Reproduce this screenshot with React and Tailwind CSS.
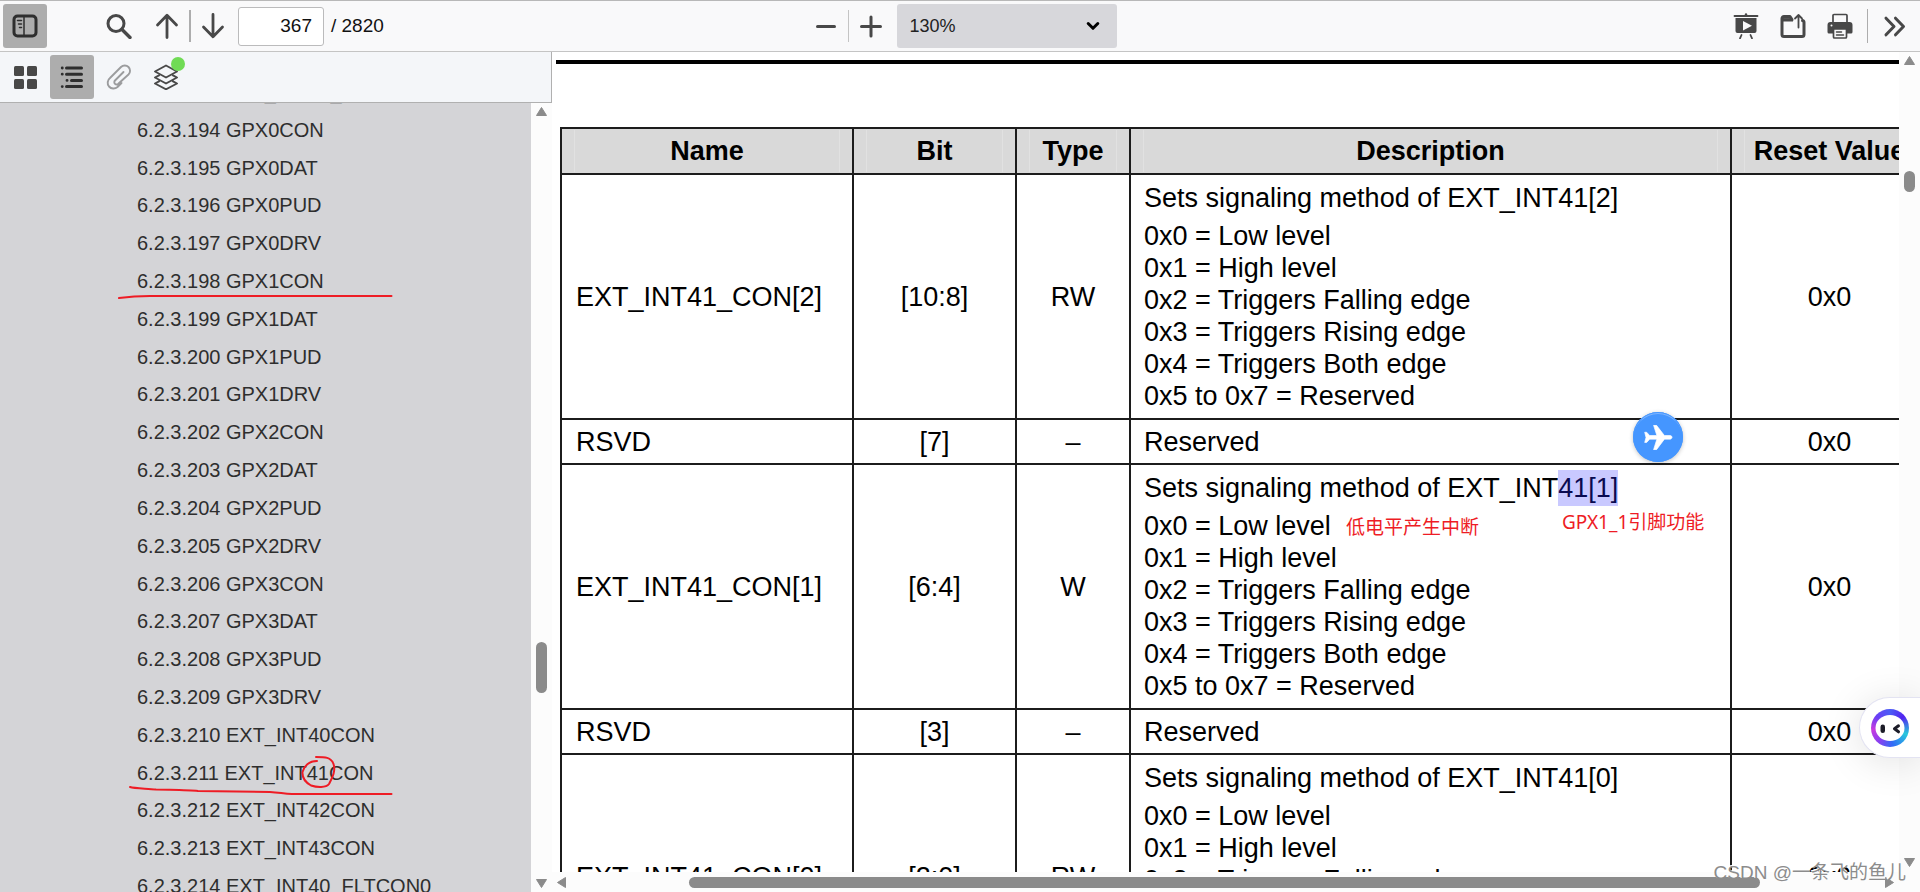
import React from "react";

const OUTLINE = [
  "6.2.3.193 EXT_INT29_FIXPRI",
  "6.2.3.194 GPX0CON",
  "6.2.3.195 GPX0DAT",
  "6.2.3.196 GPX0PUD",
  "6.2.3.197 GPX0DRV",
  "6.2.3.198 GPX1CON",
  "6.2.3.199 GPX1DAT",
  "6.2.3.200 GPX1PUD",
  "6.2.3.201 GPX1DRV",
  "6.2.3.202 GPX2CON",
  "6.2.3.203 GPX2DAT",
  "6.2.3.204 GPX2PUD",
  "6.2.3.205 GPX2DRV",
  "6.2.3.206 GPX3CON",
  "6.2.3.207 GPX3DAT",
  "6.2.3.208 GPX3PUD",
  "6.2.3.209 GPX3DRV",
  "6.2.3.210 EXT_INT40CON",
  "6.2.3.211 EXT_INT41CON",
  "6.2.3.212 EXT_INT42CON",
  "6.2.3.213 EXT_INT43CON",
  "6.2.3.214 EXT_INT40_FLTCON0",
];

const LEVELS = [
  "0x0 = Low level",
  "0x1 = High level",
  "0x2 = Triggers Falling edge",
  "0x3 = Triggers Rising edge",
  "0x4 = Triggers Both edge",
  "0x5 to 0x7 = Reserved",
];

const ROWS = [
  { name: "EXT_INT41_CON[2]", bit: "[10:8]", type: "RW", index: "41[2]" },
  { name: "RSVD", bit: "[7]", type: "–" },
  { name: "EXT_INT41_CON[1]", bit: "[6:4]", type: "W", index: "41[1]", marked: true },
  { name: "RSVD", bit: "[3]", type: "–" },
  { name: "EXT_INT41_CON[0]", bit: "[2:0]", type: "RW", index: "41[0]" },
];

function Icon({ children, className = "" }) {
  return (
    <svg
      width="26"
      height="26"
      viewBox="0 0 26 26"
      fill="none"
      stroke="currentColor"
      strokeWidth="3"
      strokeLinecap="round"
      strokeLinejoin="round"
      className={className}
      aria-hidden="true"
    >
      {children}
    </svg>
  );
}

function ToolButton({ label, active, children }) {
  return (
    <button
      type="button"
      aria-label={label}
      title={label}
      className={
        "relative flex h-11 w-11 shrink-0 items-center justify-center rounded-[3px] " +
        (active ? "bg-[#adadad] text-[#2e2e2e]" : "text-[#484848]")
      }
    >
      {children}
    </button>
  );
}

function Arrow({ dir }) {
  const d = {
    up: "M5.5 1.5 10.5 9.5H.5Z",
    down: "M5.5 9.5 .5 1.5h10Z",
    left: "M1.5 5.5 9.5 .5v10Z",
    right: "M9.5 5.5 1.5 .5v10Z",
  }[dir];
  return (
    <svg width="11" height="11" viewBox="0 0 11 11" className="shrink-0" aria-hidden="true">
      <path d={d} fill="#8b8b8b" stroke="#8b8b8b" strokeLinejoin="round" />
    </svg>
  );
}

function Toolbar() {
  return (
    <header className="flex h-[52px] shrink-0 items-center border-t border-b border-t-[#b8b8b8] border-b-[#c4c4c4] bg-[#f9f9fa] pl-[3px]">
      <div className="flex flex-1 items-center">
        <ToolButton label="Toggle Sidebar" active>
          <Icon>
            <rect x="2" y="3" width="22" height="20" rx="3.5" />
            <path d="M12 4v18" strokeWidth="1.5" />
            <path d="M5.5 7.5h4M6.5 11h3M7.5 14.5h2" strokeWidth="1.5" />
          </Icon>
        </ToolButton>
        <div className="ml-[50px] flex items-center">
          <ToolButton label="Find">
            <Icon>
              <circle cx="10" cy="10.5" r="8" />
              <path d="M16 16.5 24 24.5" strokeWidth="3.4" />
            </Icon>
          </ToolButton>
          <div className="ml-1 flex items-center">
            <ToolButton label="Previous">
              <Icon>
                <path d="M13 24.5V3M3.5 12 13 2.2 22.5 12" strokeWidth="2.8" />
              </Icon>
            </ToolButton>
            <span className="h-8 w-0.5 bg-[#adadad]" />
            <ToolButton label="Next">
              <Icon>
                <path d="M13 1.5V23M3.5 14 13 23.8 22.5 14" strokeWidth="2.8" />
              </Icon>
            </ToolButton>
          </div>
        </div>
        <input
          type="text"
          aria-label="Page"
          defaultValue="367"
          className="ml-[3px] h-[39px] w-[86px] rounded-[3px] border border-[#bbbbbc] bg-white pr-[11px] text-right text-[19px] text-[#111]"
        />
        <span className="ml-[7px] text-[19px] whitespace-nowrap text-[#111]">/ 2820</span>
      </div>
      <div className="flex items-center">
        <ToolButton label="Zoom Out">
          <Icon>
            <path d="M4.5 13.5h17" />
          </Icon>
        </ToolButton>
        <span className="h-8 w-px bg-[#c4c4c4]" />
        <ToolButton label="Zoom In">
          <Icon>
            <path d="M3.5 13.5h19M13 4v19" />
          </Icon>
        </ToolButton>
        <div className="relative ml-1 flex items-center">
          <select
            aria-label="Zoom"
            defaultValue="130%"
            className="h-11 w-[220px] appearance-none rounded-[3px] bg-[#d7d7db] px-[13px] text-[18px] text-[#222]"
          >
            <option>100%</option>
            <option>130%</option>
            <option>150%</option>
          </select>
          <svg width="14" height="10" viewBox="0 0 14 10" className="pointer-events-none absolute right-[17px]" aria-hidden="true">
            <path d="M2.2 2.5 7 7.3 11.8 2.5" fill="none" stroke="#000" strokeWidth="3" strokeLinecap="round" strokeLinejoin="round" />
          </svg>
        </div>
      </div>
      <div className="flex flex-1 items-center justify-end gap-[3px] pr-[3px]">
        <ToolButton label="Presentation Mode">
          <Icon>
            <path d="M1.5 3h23" strokeWidth="1.8" />
            <path d="M13 1.5v1" strokeWidth="2.4" />
            <path d="M2.5 5h21v13a2 2 0 0 1-2 2h-17a2 2 0 0 1-2-2Z" fill="currentColor" stroke="none" />
            <path d="M10 8v9.5l9-4.7Z" fill="#f9f9fa" stroke="none" />
            <path d="M8.5 22 7 25.3M17.500 22 19 25.3" strokeWidth="1.8" />
          </Icon>
        </ToolButton>
        <ToolButton label="Open">
          <Icon>
            <path d="M12 6.500 10 3.500H4A2 2 0 0 0 2 5.500V21.500a2 2 0 0 0 2 2H22a2 2 0 0 0 2-2V9.500a2 2 0 0 0-1.500-2" />
            <path d="M3 5.200h8l2 2.800H3Z" fill="currentColor" strokeWidth="1" />
            <path d="M18.500 14.500V2.500M15 5.500l3.500-3.500L22 5.500" strokeWidth="1.8" />
          </Icon>
        </ToolButton>
        <ToolButton label="Print">
          <Icon>
            <path d="M6 10V2.500a1 1 0 0 1 1-1h12a1 1 0 0 1 1 1V10" strokeWidth="1.700" />
            <path d="M3.500 9h19A3 3 0 0 1 25.500 12v7a1.500 1.500 0 0 1-1.500 1.500H2A1.500 1.500 0 0 1 .5 19v-7A3 3 0 0 1 3.500 9Z" fill="currentColor" stroke="none" />
            <path d="M6.500 16h13v8a1 1 0 0 1-1 1h-11a1 1 0 0 1-1-1Z" fill="#f9f9fa" strokeWidth="1.700" />
            <path d="M9.500 19h5M9.500 22h7" strokeWidth="1.500" />
            <circle cx="4.500" cy="12.500" r="1" fill="#f9f9fa" stroke="none" />
          </Icon>
        </ToolButton>
        <span className="mx-[2px] h-[34px] w-px bg-[#adadad]" />
        <ToolButton label="Tools">
          <Icon>
            <path d="M4 5.200 12 13.500 4 21.800M13.500 5.200 21.500 13.500 13.500 21.800" />
          </Icon>
        </ToolButton>
      </div>
    </header>
  );
}

function Ink() {
  return (
    <svg className="pointer-events-none absolute top-0 left-0" width="531" height="789" viewBox="0 103 531 789" fill="none" stroke="#ee1c25" strokeWidth="2" strokeLinecap="round" aria-hidden="true">
      <path d="M119 298C128 296.800 138 296 150 296H391.500" />
      <path d="M130 787C134 788.500 146 788.500 156 789.500C178 790 190 790 198 791L270 792C280 792.500 284 794 292 794H391.500" />
      <path d="M316 757C325 757 331 757 333.500 764C336 771 332 778 329 784C326 788 317 787.500 311 785.500C305 782 302 778 302.500 772C304 766 309 761 317 761" />
    </svg>
  );
}

function Sidebar() {
  return (
    <aside className="flex w-[552px] shrink-0 flex-col">
      <div className="flex h-[51px] shrink-0 items-center gap-[3px] border-r border-b border-r-[#b0b0b0] border-b-[#b0b0b0] bg-[#f4f6f9] pl-[3px]">
        <ToolButton label="Thumbnails">
          <Icon className="fill-current stroke-none">
            <rect x="2" y="2" width="10" height="10" rx="1.500" />
            <rect x="15" y="2" width="10" height="10" rx="1.500" />
            <rect x="2" y="15" width="10" height="10" rx="1.500" />
            <rect x="15" y="15" width="10" height="10" rx="1.500" />
          </Icon>
        </ToolButton>
        <ToolButton label="Document Outline" active>
          <Icon>
            <path d="M7.500 4H22.500M7.500 10.200H22.500M12.500 16.400H22.500M7.500 22.600H22.500" />
            <path d="M3.200 4h.1M3.200 10.200h.1M8 16.400h.1M3.200 22.600h.1" strokeWidth="2.800" />
          </Icon>
        </ToolButton>
        <ToolButton label="Attachments">
          <Icon className="text-[#9b9c9e]">
            <path d="M17.500 8 9 16.500a2.300 2.300 0 0 0 3.300 3.300L22.500 10.500A5.300 5.300 0 0 0 15 3L4 14A6 6 0 0 0 3 22.500A6 6 0 0 0 11.500 23L15.500 19" strokeWidth="1.900" />
          </Icon>
        </ToolButton>
        <ToolButton label="Layers">
          <Icon>
            <path d="M13 1.500 24 7.500 13 13.500 2 7.500Z" strokeWidth="1.900" />
            <path d="M6 11.300 2 13.500 13 19.500 24 13.500 20 11.300M6 17.300 2 19.500 13 25.300 24 19.500 20 17.300" strokeWidth="1.900" />
          </Icon>
          <span className="absolute top-[2px] right-[3px] h-[14px] w-[14px] rounded-full bg-[#70db55]" />
        </ToolButton>
      </div>
      <div className="flex min-h-0 flex-1">
        <nav aria-label="Document outline" className="relative min-w-0 flex-1 overflow-hidden bg-[#d4d4d7]">
          <ul className="-mt-[29px] grid h-[832px] auto-rows-fr items-center pl-[137px]">
            {OUTLINE.map((t) => (
              <li key={t} className="leading-6">
                <a href="#" className="text-[20px] whitespace-nowrap text-[#2e2e2e]">
                  {t}
                </a>
              </li>
            ))}
          </ul>
          <Ink />
        </nav>
        <div className="flex w-[21px] flex-col items-center bg-[#fcfcfc] py-[3px]">
          <Arrow dir="up" />
          <span className="grow-[526]" />
          <span className="h-[51px] w-[11px] rounded-full bg-[#8b8b8b]" />
          <span className="grow-[185]" />
          <Arrow dir="down" />
        </div>
      </div>
    </aside>
  );
}

function Description({ row }) {
  if (!row.index) return "Reserved";
  return (
    <div className="relative leading-8">
      <p className="mb-[6px]">
        Sets signaling method of EXT_INT
        {row.marked ? <mark className="bg-[#c9c9ff] py-[3px] text-[#0a0a50]">{row.index}</mark> : row.index}
      </p>
      {LEVELS.map((l) => (
        <p key={l}>{l}</p>
      ))}
      {row.marked && (
        <>
          <span className="absolute top-[41px] left-[202px] font-['Noto_Sans','Noto_Sans_CJK_SC',sans-serif] text-[19px] leading-7 whitespace-nowrap text-[#ee1c25]">
            低电平产生中断
          </span>
          <span className="absolute top-[36px] left-[418px] font-['Noto_Sans','Noto_Sans_CJK_SC',sans-serif] text-[19px] leading-7 whitespace-nowrap text-[#ee1c25]">
            GPX1_1引脚功能
          </span>
        </>
      )}
    </div>
  );
}

function Th({ children }) {
  return (
    <th className="h-[46px] border-2 border-[#1c1c1c] bg-[#d9d9d9] px-3 py-0 font-bold">
      <div className="h-[42px] border-x border-[#e1e1e1] leading-[42px] whitespace-nowrap">{children}</div>
    </th>
  );
}

function Page() {
  const cell = "border-2 border-[#1c1c1c] py-0 ";
  return (
    <div className="min-h-0 min-w-0 flex-1 overflow-hidden bg-white">
      <div className="mt-2 ml-1 h-1 bg-black" />
      <table className="mt-[63px] ml-2 w-[1369px] table-fixed border-collapse text-[27px] leading-8 text-black">
        <colgroup>
          <col className="w-[292px]" />
          <col className="w-[163px]" />
          <col className="w-[114px]" />
          <col className="w-[601px]" />
          <col className="w-[197px]" />
        </colgroup>
        <thead>
          <tr>
            <Th>Name</Th>
            <Th>Bit</Th>
            <Th>Type</Th>
            <Th>Description</Th>
            <Th>Reset Value</Th>
          </tr>
        </thead>
        <tbody>
          {ROWS.map((r) => (
            <tr key={r.bit} className={r.index ? "h-[245px]" : "h-[45px]"}>
              <td className={cell + "pl-[14px] whitespace-nowrap"}>{r.name}</td>
              <td className={cell + "text-center"}>{r.bit}</td>
              <td className={cell + "text-center"}>{r.type}</td>
              <td className={cell + "pl-[13px] whitespace-nowrap"}>
                <Description row={r} />
              </td>
              <td className={cell + "text-center"}>0x0</td>
            </tr>
          ))}
        </tbody>
      </table>
    </div>
  );
}

export default function App() {
  return (
    <div className="relative flex h-screen flex-col overflow-hidden bg-white font-['Liberation_Sans','Noto_Sans_CJK_SC',sans-serif]">
      <Toolbar />
      <div className="flex min-h-0 flex-1">
        <Sidebar />
        <main className="flex min-w-0 flex-1">
          <div className="flex min-w-0 flex-1 flex-col">
            <Page />
            <div className="flex h-5 shrink-0 items-center bg-[#fcfcfc] px-1">
              <Arrow dir="left" />
              <span className="grow-[121]" />
              <span className="h-[11px] w-[1071px] rounded-full bg-[#8b8b8b]" />
              <span className="grow-[124]" />
              <Arrow dir="right" />
            </div>
          </div>
          <div className="flex w-[21px] shrink-0 flex-col items-center bg-[#fcfcfc] pt-[3px] pb-6">
            <Arrow dir="up" />
            <span className="grow-[105]" />
            <span className="h-[21px] w-[11px] rounded-full bg-[#8b8b8b]" />
            <span className="grow-[665]" />
            <Arrow dir="down" />
          </div>
        </main>
      </div>

      <button type="button" aria-label="Translate" className="absolute top-[412px] right-[237px] flex h-[50px] w-[50px] items-center justify-center rounded-full bg-[#4596ff] shadow-[0_1px_4px_rgba(0,0,0,0.25),inset_0_0_0_1px_#4596ff,inset_0_2px_0_#7fb6ff]">
        <svg width="29" height="25" viewBox="0 0 86 76" aria-hidden="true">
          <path
            fill="#fff"
            stroke="#fff"
            strokeWidth="2"
            strokeLinejoin="round"
            d="M1 22H7L16 32H38L28 1H37L61 32H79C86 34 86 41 79 43H61L37 75H28L38 43H16L7 53H1L5 38Z"
          />
        </svg>
      </button>

      <button type="button" aria-label="Assistant" className="absolute top-[697px] right-0 flex h-[61px] w-[61px] items-center rounded-l-full border border-r-0 border-[#e3e3f2] bg-white pl-[11px] shadow-[0_4px_40px_rgba(0,0,0,0.12)]">
        <span className="flex h-[38px] w-[38px] items-center justify-center rounded-full bg-[conic-gradient(#4a5cf5,#5222f0_50deg,#28c8dc_110deg,#2f6cf6_170deg,#8a3ff0_220deg,#c83adf_265deg,#6a3ff5_310deg,#4a5cf5)]">
          <svg width="30" height="26" viewBox="0 0 30 26" aria-hidden="true">
            <ellipse cx="15" cy="13" rx="14.500" ry="13" fill="#fff" />
            <rect x="5.500" y="9.500" width="4.500" height="8.500" rx="2.200" fill="#1c1c28" />
            <path d="M23.500 10.800 19.500 13.800 23.500 16.800" fill="none" stroke="#1c1c28" strokeWidth="3" strokeLinecap="round" strokeLinejoin="round" />
          </svg>
        </span>
      </button>

      <span className="pointer-events-none absolute right-[14px] bottom-[3px] text-[19px] leading-8 whitespace-nowrap text-[#8c8c8c] [text-shadow:-1px_-1px_0_#fff]">
        CSDN @一条飞的鱼儿
      </span>
    </div>
  );
}
